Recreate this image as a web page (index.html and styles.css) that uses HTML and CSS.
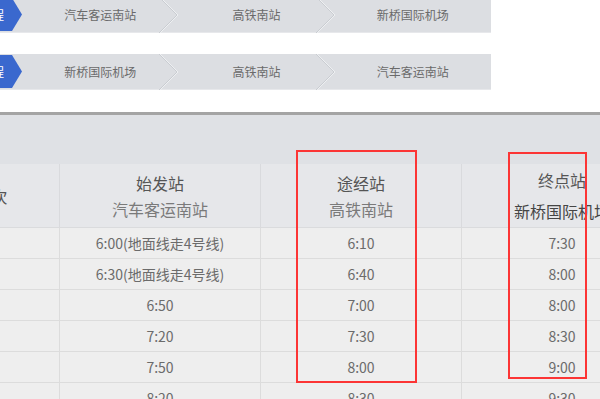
FILE: index.html
```html
<!DOCTYPE html>
<html lang="zh-CN">
<head>
<meta charset="utf-8">
<title>机场大巴时刻表</title>
<link rel="stylesheet" href="styles.css">
</head>
<body>
<div class="page">
  <div class="routes">
    <div class="route">
      <div class="route-start"><span>去程</span></div>
      <div class="seg">汽车客运南站<svg class="chev" width="20" height="36" viewBox="0 0 20 36"><polyline points="1,0 19,18 1,36" fill="none" stroke="#c9ccd1" stroke-width="1"/><polyline points="2,0 20,18 2,36" fill="none" stroke="#eef0f2" stroke-width="1"/></svg></div>
      <div class="seg">高铁南站<svg class="chev" width="20" height="36" viewBox="0 0 20 36"><polyline points="1,0 19,18 1,36" fill="none" stroke="#c9ccd1" stroke-width="1"/><polyline points="2,0 20,18 2,36" fill="none" stroke="#eef0f2" stroke-width="1"/></svg></div>
      <div class="seg">新桥国际机场</div>
    </div>
    <div class="route">
      <div class="route-start"><span>返程</span></div>
      <div class="seg">新桥国际机场<svg class="chev" width="20" height="36" viewBox="0 0 20 36"><polyline points="1,0 19,18 1,36" fill="none" stroke="#c9ccd1" stroke-width="1"/><polyline points="2,0 20,18 2,36" fill="none" stroke="#eef0f2" stroke-width="1"/></svg></div>
      <div class="seg">高铁南站<svg class="chev" width="20" height="36" viewBox="0 0 20 36"><polyline points="1,0 19,18 1,36" fill="none" stroke="#c9ccd1" stroke-width="1"/><polyline points="2,0 20,18 2,36" fill="none" stroke="#eef0f2" stroke-width="1"/></svg></div>
      <div class="seg">汽车客运南站</div>
    </div>
  </div>

  <div class="timetable">
    <div class="band"></div>
    <div class="row head">
      <div class="cell"><span class="h1">车次</span></div>
      <div class="cell"><span class="h1">始发站</span><span class="h2">汽车客运南站</span></div>
      <div class="cell"><span class="h1">途经站</span><span class="h2">高铁南站</span></div>
      <div class="cell"><span class="h1">终点站</span><span class="h2 strong">新桥国际机场</span></div>
    </div>
    <div class="row"><div class="cell">1</div><div class="cell">6:00(地面线走4号线)</div><div class="cell">6:10</div><div class="cell">7:30</div></div>
    <div class="row"><div class="cell">2</div><div class="cell">6:30(地面线走4号线)</div><div class="cell">6:40</div><div class="cell">8:00</div></div>
    <div class="row"><div class="cell">3</div><div class="cell">6:50</div><div class="cell">7:00</div><div class="cell">8:00</div></div>
    <div class="row"><div class="cell">4</div><div class="cell">7:20</div><div class="cell">7:30</div><div class="cell">8:30</div></div>
    <div class="row"><div class="cell">5</div><div class="cell">7:50</div><div class="cell">8:00</div><div class="cell">9:00</div></div>
    <div class="row"><div class="cell">6</div><div class="cell">8:20</div><div class="cell">8:30</div><div class="cell">9:30</div></div>
  </div>

  <div class="mark mark-mid"></div>
  <div class="mark mark-end"></div>
</div>
</body>
</html>
```

FILE: styles.css
```css
html, body {
  margin: 0;
  padding: 0;
  background: #ffffff;
}

.page {
  position: relative;
  width: 600px;
  height: 399px;
  overflow: hidden;
  font-family: "Noto Sans CJK SC", "Noto Sans", sans-serif;
  color: #666666;
}

.routes {
  display: flex;
  flex-direction: column;
  gap: 21px;
  margin-top: -3px;
  margin-bottom: 22px;
}

.route {
  display: flex;
  width: 491px;
  height: 36px;
  box-sizing: border-box;
  padding: 1px 0;
  background: #dcdee2;
  border-bottom: 1px solid #e7e8eb;
}

.route-start {
  flex: 0 0 60px;
  margin-left: -38px;
  background: #3a68ce;
  clip-path: polygon(0 0, 50px 0, 60px 50%, 50px 100%, 0 100%);
  display: flex;
  align-items: center;
  justify-content: flex-end;
  padding-right: 18px;
  box-sizing: border-box;
  color: #ffffff;
  font-size: 12px;
}

.seg {
  position: relative;
  flex: 1 1 0;
  display: flex;
  align-items: center;
  justify-content: center;
  font-size: 12px;
  color: #6a6a6a;
}

.chev {
  position: absolute;
  right: 0;
  top: -1px;
}

.timetable {
  margin-left: -76px;
  width: 740px;
  border-top: 3px solid #a4a4a4;
}

.band {
  height: 49px;
  background: #dfe1e5;
}

.row {
  display: grid;
  grid-template-columns: 136px 201px 201px 201px;
  height: 31px;
  background: #eeeeee;
}

.cell {
  box-sizing: border-box;
  border-right: 1px solid #dcdcdc;
  border-bottom: 1px solid #dcdcdc;
  display: flex;
  flex-direction: column;
  align-items: center;
  justify-content: center;
  font-size: 14px;
  color: #6b6b6b;
  white-space: nowrap;
}

.row.head {
  height: 64px;
  background: #e6e7ea;
}

.row.head .cell {
  border-right-color: #d9dadd;
  border-bottom-color: #dadbdd;
}

.h1 {
  font-size: 16px;
  line-height: 26px;
  color: #555555;
}

.h2 {
  font-size: 16px;
  line-height: 26px;
  color: #7a7a7a;
}

.h2.strong {
  margin-top: 5px;
  color: #454545;
}

.mark {
  position: absolute;
  box-sizing: border-box;
  border: 2px solid #fc3535;
}

.mark-mid {
  left: 296px;
  top: 150px;
  width: 121px;
  height: 233px;
}

.mark-end {
  left: 508px;
  top: 152px;
  width: 79px;
  height: 227px;
}
```
